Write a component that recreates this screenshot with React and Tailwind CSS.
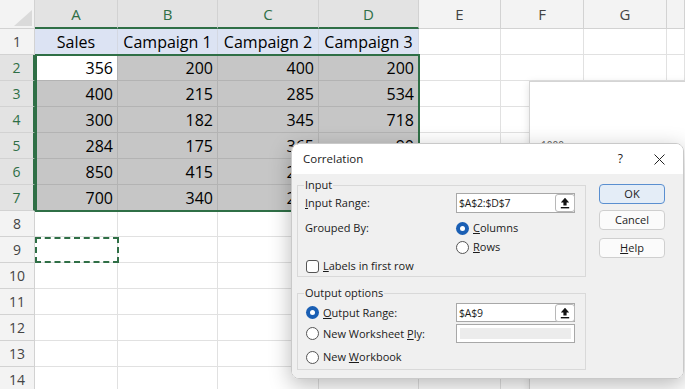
import React from "react";

const rows = [
  ["Sales", "Campaign 1", "Campaign 2", "Campaign 3"],
  ["356", "200", "400", "200"],
  ["400", "215", "285", "534"],
  ["300", "182", "345", "718"],
  ["284", "175", "365", "90"],
  ["850", "415", "255", "612"],
  ["700", "340", "210", "480"],
];

const letters = ["A", "B", "C", "D", "E", "F", "G", ""];

function UpBtn() {
  return (
    <div className="w-[20px] h-[18px] bg-white border border-[#b8b8b8] rounded-[3px] flex items-center justify-center -mr-px">
      <svg width="10" height="12" viewBox="0 0 10 12">
        <path d="M5 0.8 L9.2 5.6 H6.6 V8.6 H3.4 V5.6 H0.8 Z" fill="#111" />
        <rect x="0.8" y="10" width="8.4" height="1.4" fill="#111" />
      </svg>
    </div>
  );
}

function Radio({ checked }) {
  return checked ? (
    <div className="w-[13px] h-[13px] rounded-full bg-[#1a5fb4] flex items-center justify-center shrink-0">
      <div className="w-[5px] h-[5px] rounded-full bg-white" />
    </div>
  ) : (
    <div className="w-[13px] h-[13px] rounded-full bg-white border border-[#555] shrink-0" />
  );
}

function Dialog() {
  return (
    <div className="absolute left-[291px] top-[143px] w-[393px] h-[236px] rounded-[8px] border border-[#c9c9c9] shadow-[0_6px_22px_rgba(0,0,0,0.28)] overflow-hidden flex flex-col text-[11px] leading-[16px] text-[#1b1b1b] font-['Open_Sans',sans-serif]">
      <div className="h-[30px] bg-white flex items-center pl-[11px] shrink-0">
        <span className="text-[11.5px]">Correlation</span>
        <span className="ml-auto mr-[31px] text-[12px]">?</span>
        <svg width="11" height="11" viewBox="0 0 11 11" className="mr-[18px]">
          <path d="M0.5 0.5 L10.5 10.5 M10.5 0.5 L0.5 10.5" stroke="#222" strokeWidth="1" />
        </svg>
      </div>
      <div className="flex-1 bg-[#f0f0f0] flex pl-[5px] pt-[3px]">
        <div className="w-[289px] flex flex-col">
          <fieldset className="border border-[#d9d9d9]">
            <legend className="ml-[6px] px-[1px]">Input</legend>
            <div className="pl-[7px] pb-[2px]">
              <div className="flex items-center h-[20px]">
                <span className="w-[151px]"><u>I</u>nput Range:</span>
                <div className="w-[119px] h-[20px] bg-white border border-[#a8a8a8] flex items-center pl-[2px]">
                  <span className="text-[10.5px] tracking-[-0.2px]">$A$2:$D$7</span>
                  <div className="ml-auto"><UpBtn /></div>
                </div>
              </div>
              <div className="flex mt-[7px]">
                <span className="w-[151px] h-[16px] flex items-center">Grouped By:</span>
                <div className="flex flex-col gap-[3px]">
                  <div className="flex items-center h-[16px] gap-[4px]"><Radio checked /><span><u>C</u>olumns</span></div>
                  <div className="flex items-center h-[16px] gap-[4px]"><Radio /><span><u>R</u>ows</span></div>
                </div>
              </div>
              <div className="flex items-center h-[16px] mt-[3px] gap-[4px] pl-[1px]">
                <div className="w-[13px] h-[13px] rounded-[3px] bg-white border border-[#555]" />
                <span><u>L</u>abels in first row</span>
              </div>
            </div>
          </fieldset>
          <fieldset className="border border-[#d9d9d9] mt-[8px]">
            <legend className="ml-[6px] px-[1px]">Output options</legend>
            <div className="pl-[8px] pb-[4px]">
              <div className="flex items-center h-[19px] mt-[2px]">
                <div className="w-[150px] flex items-center gap-[4px]"><Radio checked /><span><u>O</u>utput Range:</span></div>
                <div className="w-[119px] h-[19px] bg-white border border-[#a8a8a8] flex items-center pl-[2px]">
                  <span className="text-[10.5px] tracking-[-0.2px]">$A$9</span>
                  <div className="ml-auto"><UpBtn /></div>
                </div>
              </div>
              <div className="flex items-center h-[19px] mt-[2px]">
                <div className="w-[150px] flex items-center gap-[4px]"><Radio /><span>New Worksheet <u>P</u>ly:</span></div>
                <div className="w-[119px] h-[19px] bg-white border border-[#a8a8a8] p-[3px]">
                  <div className="w-full h-full bg-[#ececec]" />
                </div>
              </div>
              <div className="flex items-center h-[16px] mt-[6px] gap-[4px]">
                <Radio /><span>New <u>W</u>orkbook</span>
              </div>
            </div>
          </fieldset>
        </div>
        <div className="ml-[13px] mt-[7px] flex flex-col w-[66px]">
          <div className="h-[20px] rounded-[4px] border border-[#5a8fd0] bg-[#e4edf7] flex items-center justify-center">OK</div>
          <div className="h-[20px] mt-[6px] rounded-[4px] border border-[#cfcfcf] bg-[#fbfbfb] flex items-center justify-center">Cancel</div>
          <div className="h-[20px] mt-[8px] rounded-[4px] border border-[#cfcfcf] bg-[#fbfbfb] flex items-center justify-center"><span><u>H</u>elp</span></div>
        </div>
      </div>
    </div>
  );
}

export default function App() {
  const dataRows = Array.from({ length: 14 }, (_, i) => i + 1);
  return (
    <div className="relative w-[685px] h-[389px] overflow-hidden bg-white font-['Open_Sans',sans-serif]">
      <div className="grid grid-cols-[35px_83px_100px_101px_100px_82px_83px_83px_1fr] grid-rows-[29px_repeat(14,26px)]">
        <div className="bg-[#f3f3f3] border-r border-b border-[#d2d2d2] flex items-end justify-end pr-[2px] pb-[2px]">
          <svg width="18" height="16" viewBox="0 0 18 16">
            <path d="M18 0 L18 16 L0 16 Z" fill="#dadada" />
          </svg>
        </div>
        {letters.map((l, c) =>
          c < 4 ? (
            <div key={"h" + c} className="bg-[#e3e3e3] border-r border-r-[#d2d2d2] border-b-2 border-b-[#2f6f46] flex items-center justify-center text-[15px] text-[#2f6f46] pt-[1px]">
              {l}
            </div>
          ) : (
            <div key={"h" + c} className="bg-[#f3f3f3] border-r border-b border-[#d2d2d2] flex items-center justify-center text-[15px] text-[#444] pt-[1px]">
              {l}
            </div>
          )
        )}
        {dataRows.map((r) => (
          <React.Fragment key={r}>
            {r >= 2 && r <= 7 ? (
              <div className="bg-[#e3e3e3] border-b border-b-[#d2d2d2] border-r-2 border-r-[#2f6f46] flex items-center justify-center text-[14px] text-[#2f6f46]">
                {r}
              </div>
            ) : (
              <div className="bg-[#f3f3f3] border-r border-b border-[#d2d2d2] flex items-center justify-center text-[14px] text-[#444]">
                {r}
              </div>
            )}
            {letters.map((_, c) => {
              const v = r <= 7 && c < 4 ? rows[r - 1][c] : "";
              if (r === 1 && c < 4)
                return (
                  <div key={c} className="bg-[#dce3f3] border-r border-b border-[#d4d8e2] flex items-center justify-center text-[16px] text-black whitespace-nowrap">
                    {v}
                  </div>
                );
              if (r >= 2 && r <= 7 && c < 4)
                return (
                  <div key={c} className={(r === 2 && c === 0 ? "bg-white" : "bg-[#c6c6c6]") + " border-r border-b border-[#b3b3b3] flex items-center justify-end pr-[4px] text-[16px] text-black"}>
                    {v}
                  </div>
                );
              return <div key={c} className="bg-white border-r border-b border-[#e1e1e1]" />;
            })}
          </React.Fragment>
        ))}
      </div>

      {/* selection border */}
      <div className="absolute left-[35px] top-[54px] w-[385px] h-[158px] border-2 border-[#2f6f46] pointer-events-none" />
      {/* copy marquee */}
      <div className="absolute left-[35px] top-[237px] w-[84px] h-[26px] border-2 border-dashed border-[#2f6f46] pointer-events-none" />

      {/* chart object */}
      <div className="absolute left-[529px] top-[81px] w-[170px] h-[320px] bg-white border border-[#d4d4d4] shadow-[0_2px_8px_rgba(0,0,0,0.12)]">
        <span className="absolute left-[11px] top-[56px] text-[10px] text-[#595959]">1000</span>
      </div>

      <Dialog />
    </div>
  );
}
